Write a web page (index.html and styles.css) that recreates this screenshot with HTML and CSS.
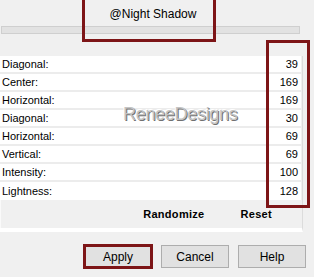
FILE: index.html
```html
<!DOCTYPE html>
<html lang="en">
<head>
  <meta charset="UTF-8">
  <title>Night Shadow</title>
  <link rel="stylesheet" href="styles.css">
</head>
<body>
  <div class="dialog">

    <!-- preset header -->
    <div class="preset">
      <span class="preset-name">@Night Shadow</span>
      <div class="preset-bar"></div>
      <div class="mark mark-preset"></div>
    </div>

    <!-- parameter list -->
    <div class="panel">
      <div class="params">
        <div class="row"><span>Diagonal:</span><span>39</span></div>
        <div class="row"><span>Center:</span><span>169</span></div>
        <div class="row"><span>Horizontal:</span><span>169</span></div>
        <div class="row"><span>Diagonal:</span><span>30</span></div>
        <div class="row"><span>Horizontal:</span><span>69</span></div>
        <div class="row"><span>Vertical:</span><span>69</span></div>
        <div class="row"><span>Intensity:</span><span>100</span></div>
        <div class="row"><span>Lightness:</span><span>128</span></div>
      </div>
      <div class="actions">
        <span class="action">Randomize</span>
        <span class="action">Reset</span>
      </div>
      <div class="watermark">ReneeDesigns</div>
      <div class="mark mark-values"></div>
    </div>

    <!-- dialog buttons -->
    <div class="buttons">
      <button type="button" class="btn btn-default">Apply</button>
      <button type="button" class="btn">Cancel</button>
      <button type="button" class="btn">Help</button>
    </div>

  </div>
</body>
</html>
```

FILE: styles.css
```css
* { box-sizing: border-box; margin: 0; padding: 0; }
body {
  background: #f0f0f0; width: 314px; height: 277px; overflow: hidden;
  font-family: 'Liberation Sans', Arial, sans-serif; font-size: 11px; color: #000;
}
.dialog { position: relative; width: 314px; height: 277px; }

/* Preset header */
.preset { position: relative; height: 56px; padding-top: 7px; }
.preset-name { display: block; width: 306px; text-align: center; font-size: 12px; height: 19px; }
.preset-bar {
  margin-left: 1px; width: 299px; height: 8px;
  background: #e2e2e2; border: 1px solid #cfcfcf;
}

/* highlight boxes */
.mark { position: absolute; border: 3px solid #7d1517; }
.mark-preset { left: 82px; top: -4px; width: 134px; height: 46px; }
.mark-values { left: 266px; top: -16px; width: 44px; height: 168px; }

/* Parameter panel */
.panel {
  position: relative; width: 303px; border-right: 1px solid #dcdcdc;
  border-bottom: 4px solid #fff;
}
.params { background: #fff; width: 301px; }
.row {
  display: flex; justify-content: space-between; align-items: center;
  height: 18px; padding: 0 3px 0 2px; border-bottom: 2px solid #ececec;
}
.row:last-child { border-bottom: none; }
.actions {
  display: flex; justify-content: flex-end; gap: 36px;
  height: 28px; align-items: center; padding-right: 30px;
  border-left: 1px solid #fafafa;
}
.action { font-weight: bold; font-size: 11px; letter-spacing: 0.3px; }
.watermark {
  position: absolute; left: 123px; top: 48px;
  font-size: 18px; letter-spacing: -0.3px; color: #c4c4c4;
  text-shadow: 1px 1px 0 #707070, -1px -1px 0 #fff;
}

/* Buttons */
.buttons {
  display: flex; justify-content: flex-end; gap: 9px;
  padding: 13px 8px 0 0;
}
.btn {
  width: 68px; height: 23px; background: #e1e1e1; border: 1px solid #adadad;
  font-family: 'Liberation Sans', Arial, sans-serif; font-size: 12px; color: #000;
}
.btn-default { border: 1px solid #0078d7; outline: 3px solid #7d1517; outline-offset: -2px; }
```
